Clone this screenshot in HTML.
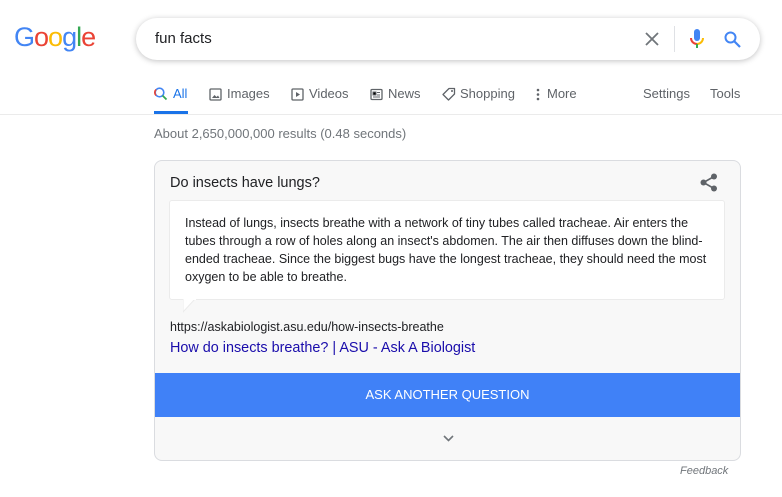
<!DOCTYPE html>
<html><head><style>
body{margin:0;width:782px;height:497px;background:#fff;font-family:"Liberation Sans",Arial,sans-serif;position:relative;overflow:hidden}
.a{position:absolute;white-space:nowrap}
.logo{left:14px;top:22px;font-size:27px;letter-spacing:-1px}
.sb{left:136px;top:18px;width:624px;height:42px;border-radius:21px;box-shadow:0 1px 6px rgba(32,33,36,.28);background:#fff}
.nav{top:86px;font-size:13px;color:#5f6368}
.card{left:154px;top:160px;width:585px;height:299px;border:1px solid #dadce0;border-radius:8px;background:#f8f8f8;overflow:hidden}
</style></head><body>
<div class="a logo"><span style="color:#4285f4">G</span><span style="color:#ea4335">o</span><span style="color:#fbbc05">o</span><span style="color:#4285f4">g</span><span style="color:#34a853">l</span><span style="color:#ea4335">e</span></div>
<div class="a sb"></div>
<div class="a" style="left:155px;top:30px;font-size:15px;color:#202124">fun facts</div>
<svg class="a" style="left:645px;top:32px" width="14" height="14" viewBox="0 0 14 14"><path d="M1 1L13 13M13 1L1 13" stroke="#70757a" stroke-width="1.8"/></svg>
<div class="a" style="left:674px;top:26px;width:1px;height:26px;background:#dfe1e5"></div>
<svg class="a" style="left:689px;top:28px" width="16" height="22" viewBox="0 0 16 22"><rect x="5" y="1" width="6" height="12" rx="3" fill="#4285f4"/><path d="M2 10a6 6 0 0 0 6 6" stroke="#ea4335" stroke-width="2" fill="none"/><path d="M14 10a6 6 0 0 1-6 6" stroke="#fbbc05" stroke-width="2" fill="none"/><path d="M8 16v4" stroke="#34a853" stroke-width="2"/></svg>
<svg class="a" style="left:724px;top:31px" width="17" height="17" viewBox="0 0 17 17"><circle cx="6.5" cy="6.5" r="5" stroke="#4285f4" stroke-width="2" fill="none"/><path d="M10 10l6 6" stroke="#4285f4" stroke-width="2.2"/></svg>
<svg class="a" style="left:154px;top:87px" width="14" height="14" viewBox="0 0 14 14"><circle cx="5.5" cy="5.5" r="4.3" stroke="#4285f4" stroke-width="1.6" fill="none"/><path d="M2 2.5a4.3 4.3 0 0 0 0 6" stroke="#ea4335" stroke-width="1.6" fill="none"/><path d="M8.5 8.5l4 4" stroke="#34a853" stroke-width="1.8"/></svg>
<div class="a nav" style="left:173px;color:#1a73e8">All</div>
<div class="a" style="left:154px;top:111px;width:34px;height:3px;background:#1a73e8"></div>
<svg class="a" style="left:209px;top:88px" width="13" height="13"><rect x="1" y="1" width="11" height="11" rx="1" stroke="#5f6368" stroke-width="1.3" fill="none"/><path d="M3 10l2.5-3 2 2 1.5-1.5 1.5 2.5z" fill="#5f6368"/></svg>
<div class="a nav" style="left:227px">Images</div>
<svg class="a" style="left:291px;top:88px" width="13" height="13"><rect x="1" y="1" width="11" height="11" rx="1" stroke="#5f6368" stroke-width="1.3" fill="none"/><path d="M5 4v5l4-2.5z" fill="#5f6368"/></svg>
<div class="a nav" style="left:309px">Videos</div>
<svg class="a" style="left:370px;top:88px" width="13" height="13"><rect x="1" y="1.5" width="11" height="10" rx="1" stroke="#5f6368" stroke-width="1.3" fill="none"/><path d="M3 4h3v3H3zM7 4.5h3M7 7h3M3 9h7" stroke="#5f6368" stroke-width="1"/></svg>
<div class="a nav" style="left:388px">News</div>
<svg class="a" style="left:442px;top:87px" width="14" height="14"><path d="M7 1.5h5.5V7L6.5 13 1 7.5z" stroke="#5f6368" stroke-width="1.3" fill="none" stroke-linejoin="round"/><circle cx="10" cy="4" r="1" fill="#5f6368"/></svg>
<div class="a nav" style="left:460px">Shopping</div>
<svg class="a" style="left:536px;top:88px" width="4" height="13"><circle cx="2" cy="2" r="1.3" fill="#5f6368"/><circle cx="2" cy="6.5" r="1.3" fill="#5f6368"/><circle cx="2" cy="11" r="1.3" fill="#5f6368"/></svg>
<div class="a nav" style="left:547px">More</div>
<div class="a nav" style="left:643px">Settings</div>
<div class="a nav" style="left:710px">Tools</div>
<div class="a" style="left:0;top:114px;width:782px;height:1px;background:#ebebeb"></div>
<div class="a" style="left:154px;top:126px;font-size:13px;color:#70757a">About 2,650,000,000 results (0.48 seconds)</div>
<div class="a card">
 <div class="a" style="left:15px;top:14px;font-size:14.5px;color:#202124">Do insects have lungs?</div>
 <svg class="a" style="left:545px;top:12px" width="18" height="19" viewBox="0 0 18 19"><circle cx="14" cy="3.5" r="3" fill="#5f6368"/><circle cx="3.5" cy="9.5" r="3" fill="#5f6368"/><circle cx="14" cy="15.5" r="3" fill="#5f6368"/><path d="M14 3.5L3.5 9.5 14 15.5" stroke="#5f6368" stroke-width="1.6" fill="none"/></svg>
 <div class="a" style="left:14px;top:39px;width:556px;height:100px;background:#fff;border:1px solid #ebebeb;border-radius:3px;box-sizing:border-box"></div>
 <svg class="a" style="left:28px;top:138px" width="14" height="14"><path d="M0 0v13L12 0" fill="#fff" stroke="#ebebeb"/><path d="M1 0h12" stroke="#fff" stroke-width="2"/></svg>
 <div class="a" style="left:30px;top:53px;width:530px;white-space:normal;font-size:12.5px;line-height:18px;color:#202124">Instead of lungs, insects breathe with a network of tiny tubes called tracheae. Air enters the tubes through a row of holes along an insect's abdomen. The air then diffuses down the blind-ended tracheae. Since the biggest bugs have the longest tracheae, they should need the most oxygen to be able to breathe.</div>
 <div class="a" style="left:15px;top:159px;font-size:12.5px;color:#202124">https://askabiologist.asu.edu/how-insects-breathe</div>
 <div class="a" style="left:15px;top:179px;font-size:14.4px;color:#1a0dab">How do insects breathe? | ASU - Ask A Biologist</div>
 <div class="a" style="left:0;top:212px;width:585px;height:44px;background:#4081f7;color:#fff;font-size:13px;text-align:center;line-height:44px">ASK ANOTHER QUESTION</div>
 <svg class="a" style="left:288px;top:274px" width="11" height="7"><path d="M1 1l4.5 4.5L10 1" stroke="#70757a" stroke-width="1.6" fill="none"/></svg>
</div>
<div class="a" style="left:680px;top:465px;font-size:11px;font-style:italic;color:#70757a">Feedback</div>
</body></html>
